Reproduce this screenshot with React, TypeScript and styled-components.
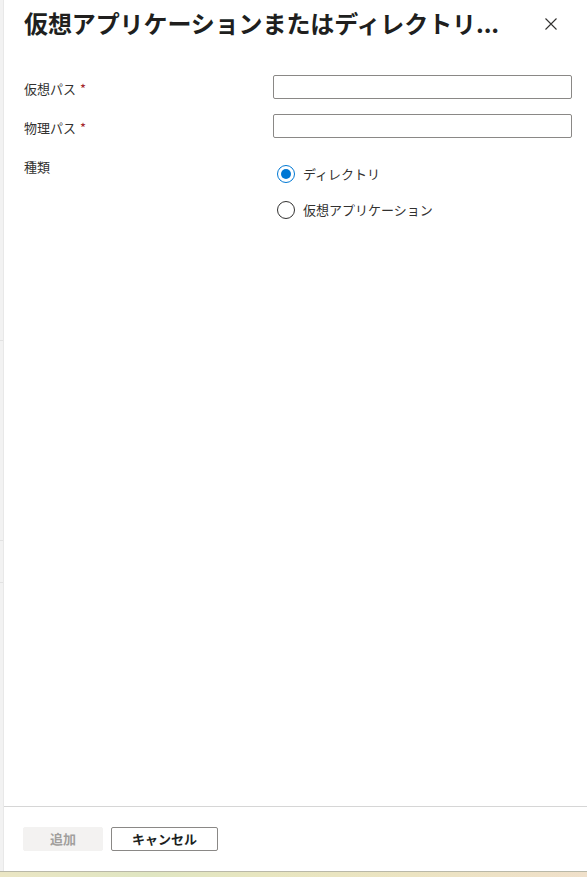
import React, { useState } from "react";
import styled, { createGlobalStyle } from "styled-components";

const Global = createGlobalStyle`
  html, body { margin: 0; padding: 0; background: #ffffff; }
  body {
    font-family: "Noto Sans CJK JP", "Noto Sans", "Liberation Sans", sans-serif;
    color: #323130;
    -webkit-font-smoothing: antialiased;
  }
  * { box-sizing: border-box; }
`;

const Page = styled.div`
  display: flex;
  flex-direction: column;
  width: 587px;
  height: 877px;
  overflow: hidden;
`;

const Main = styled.div`
  display: flex;
  flex: 1;
  min-height: 0;
`;

const BackStrip = styled.div`
  width: 4px;
  flex: none;
  background: linear-gradient(
    to bottom,
    #f2f2f2 0px,
    #f2f2f2 340px,
    #e2e2e2 340px,
    #e2e2e2 341px,
    #f2f2f2 341px,
    #f2f2f2 540px,
    #e2e2e2 540px,
    #e2e2e2 541px,
    #f2f2f2 541px,
    #f2f2f2 582px,
    #e2e2e2 582px,
    #e2e2e2 583px,
    #f2f2f2 583px
  );
  border-right: 1px solid #e8e8e8;
`;

const Panel = styled.div`
  flex: 1;
  display: flex;
  flex-direction: column;
  background: #ffffff;
  min-width: 0;
`;

const Header = styled.div`
  display: flex;
  align-items: flex-start;
  justify-content: space-between;
  height: 75px;
  padding: 6px 24px 0 20px;
`;

const Title = styled.h1`
  margin: 0;
  font-size: 24px;
  line-height: 34px;
  font-weight: 700;
  color: #201f1e;
  white-space: nowrap;
  overflow: hidden;
  letter-spacing: -0.1px;
`;

const CloseButton = styled.button`
  width: 24px;
  height: 24px;
  margin-top: 6px;
  padding: 0;
  border: none;
  background: transparent;
  display: flex;
  align-items: center;
  justify-content: center;
  cursor: pointer;
  color: #323130;
`;

const Body = styled.div`
  flex: 1;
  padding: 0 15px 0 20px;
`;

const Form = styled.div`
  display: grid;
  grid-template-columns: 249px 1fr;
  row-gap: 15px;
`;

const Label = styled.label`
  display: block;
  padding-top: 5px;
  font-size: 13px;
  line-height: 18px;
  color: #323130;
`;

const Required = styled.span`
  color: #a4262c;
  margin-left: 4px;
`;

const TextInput = styled.input`
  display: block;
  width: 100%;
  height: 24px;
  border: 1px solid #8a8886;
  border-radius: 2px;
  padding: 0 8px;
  font-size: 13px;
  font-family: inherit;
  outline: none;
  background: #ffffff;
`;

const RadioGroup = styled.div`
  display: flex;
  flex-direction: column;
  gap: 16px;
  padding: 11px 0 0 4px;
`;

const RadioItem = styled.label`
  display: flex;
  align-items: center;
  gap: 8px;
  height: 20px;
  font-size: 13px;
  line-height: 18px;
  color: #323130;
  cursor: pointer;
`;

const RadioCircle = styled.span<{ $checked: boolean }>`
  width: 18px;
  height: 18px;
  flex: none;
  border-radius: 50%;
  border: 1px solid ${(p) => (p.$checked ? "#0078d4" : "#323130")};
  display: flex;
  align-items: center;
  justify-content: center;
  &::after {
    content: "";
    width: 10px;
    height: 10px;
    border-radius: 50%;
    background: ${(p) => (p.$checked ? "#0078d4" : "transparent")};
  }
`;

const Footer = styled.div`
  display: flex;
  gap: 8px;
  border-top: 1px solid #d6d6d6;
  padding: 20px 20px 20px 19px;
`;

const Button = styled.button<{ $disabled?: boolean }>`
  height: 24px;
  min-width: 80px;
  padding: 0 20px;
  border-radius: 2px;
  font-family: inherit;
  font-size: 13px;
  font-weight: 700;
  line-height: 22px;
  cursor: ${(p) => (p.$disabled ? "default" : "pointer")};
  border: 1px solid ${(p) => (p.$disabled ? "#f3f2f1" : "#8a8886")};
  background: ${(p) => (p.$disabled ? "#f3f2f1" : "#ffffff")};
  color: ${(p) => (p.$disabled ? "#a19f9d" : "#201f1e")};
`;

const BottomBar = styled.div`
  height: 6px;
  flex: none;
  border-top: 1px solid #b9b8a8;
  background: linear-gradient(
    to right,
    #ebe6c4 0%,
    #e0e6c2 25%,
    #e8e6c0 45%,
    #ece4c2 70%,
    #f0e0ca 100%
  );
`;

const CloseIcon = () => (
  <svg width="12" height="12" viewBox="0 0 12 12" fill="none">
    <path d="M0.5 0.5 L11.5 11.5 M11.5 0.5 L0.5 11.5" stroke="#323130" strokeWidth="1.1" />
  </svg>
);

export default function App() {
  const [kind, setKind] = useState<"dir" | "app">("dir");
  return (
    <>
      <Global />
      <Page>
        <Main>
          <BackStrip />
          <Panel>
            <Header>
              <Title>仮想アプリケーションまたはディレクトリ...</Title>
              <CloseButton aria-label="閉じる">
                <CloseIcon />
              </CloseButton>
            </Header>
            <Body>
              <Form>
                <Label>
                  仮想パス<Required>*</Required>
                </Label>
                <TextInput />
                <Label>
                  物理パス<Required>*</Required>
                </Label>
                <TextInput />
                <Label>種類</Label>
                <RadioGroup>
                  <RadioItem onClick={() => setKind("dir")}>
                    <RadioCircle $checked={kind === "dir"} />
                    ディレクトリ
                  </RadioItem>
                  <RadioItem onClick={() => setKind("app")}>
                    <RadioCircle $checked={kind === "app"} />
                    仮想アプリケーション
                  </RadioItem>
                </RadioGroup>
              </Form>
            </Body>
            <Footer>
              <Button $disabled>追加</Button>
              <Button>キャンセル</Button>
            </Footer>
          </Panel>
        </Main>
        <BottomBar />
      </Page>
    </>
  );
}
